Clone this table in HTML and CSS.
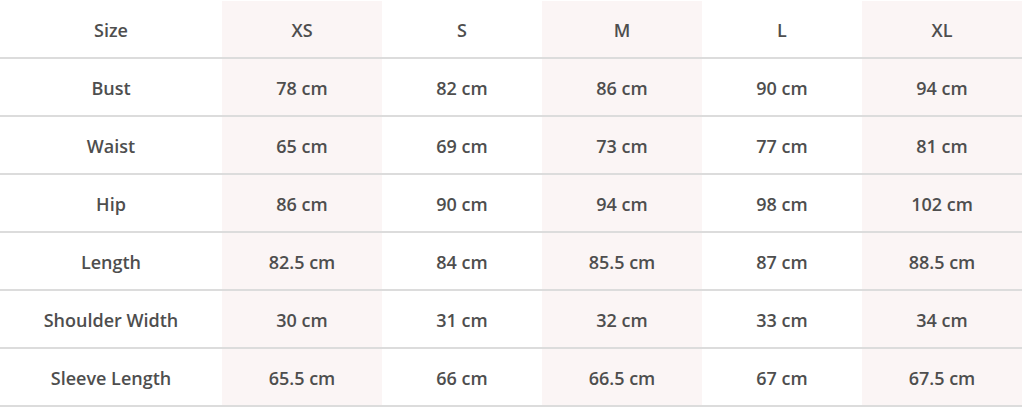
FILE: index.html
```html
<!DOCTYPE html>
<html>
<head>
<meta charset="utf-8">
<link rel="stylesheet" href="styles.css">
</head>
<body>
<table class="size-table">
  <colgroup>
    <col class="col-label">
    <col class="col-shade">
    <col class="col-plain">
    <col class="col-shade">
    <col class="col-plain">
    <col class="col-shade">
  </colgroup>
  <thead>
    <tr><th>Size</th><th>XS</th><th>S</th><th>M</th><th>L</th><th>XL</th></tr>
  </thead>
  <tbody>
    <tr><th>Bust</th><td>78 cm</td><td>82 cm</td><td>86 cm</td><td>90 cm</td><td>94 cm</td></tr>
    <tr><th>Waist</th><td>65 cm</td><td>69 cm</td><td>73 cm</td><td>77 cm</td><td>81 cm</td></tr>
    <tr><th>Hip</th><td>86 cm</td><td>90 cm</td><td>94 cm</td><td>98 cm</td><td>102 cm</td></tr>
    <tr><th>Length</th><td>82.5 cm</td><td>84 cm</td><td>85.5 cm</td><td>87 cm</td><td>88.5 cm</td></tr>
    <tr><th>Shoulder Width</th><td>30 cm</td><td>31 cm</td><td>32 cm</td><td>33 cm</td><td>34 cm</td></tr>
    <tr><th>Sleeve Length</th><td>65.5 cm</td><td>66 cm</td><td>66.5 cm</td><td>67 cm</td><td>67.5 cm</td></tr>
  </tbody>
</table>
</body>
</html>
```
FILE: styles.css
```css
html, body {
  margin: 0;
  padding: 0;
  background: #ffffff;
}
body {
  padding-top: 1px;
  font-family: "Open Sans", "Liberation Sans", sans-serif;
  color: #4e4e4e;
}
.size-table {
  width: 1022px;
  border-collapse: collapse;
  table-layout: fixed;
}
.col-label { width: 222px; }
.col-shade { width: 160px; background: #fbf5f5; }
.col-plain { width: 160px; }
.size-table th,
.size-table td {
  height: 54px;
  padding: 2px 0 0;
  text-align: center;
  vertical-align: middle;
  font-size: 18px;
  line-height: 24px;
  font-weight: 600;
  border-bottom: 2px solid #dcdcdc;
}
```
